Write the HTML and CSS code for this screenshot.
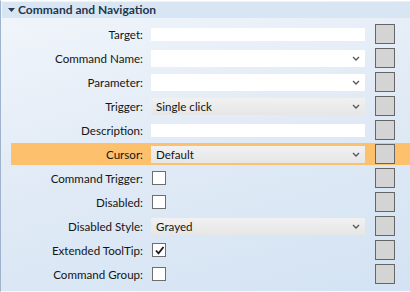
FILE: index.html
```html
<!DOCTYPE html>
<html lang="en">
<head>
  <meta charset="UTF-8">
  <title>Command and Navigation</title>
  <link rel="stylesheet" href="styles.css">
</head>
<body>
  <div class="panel">
    <div class="panel-head">
      <svg class="caret" width="7" height="4" viewBox="0 0 7 4"><path d="M0 0h7L3.5 4z" fill="#2a3b52"/></svg>
      <span>Command and Navigation</span>
    </div>

    <div class="row">
      <label>Target:</label>
      <div class="field text"></div>
      <div class="btn"></div>
    </div>
    <div class="row">
      <label>Command Name:</label>
      <div class="field combo white"><span></span><svg class="chev" width="8" height="5" viewBox="0 0 8 5"><path d="M1 1l3 3 3-3" fill="none" stroke="#555" stroke-width="1.3"/></svg></div>
      <div class="btn"></div>
    </div>
    <div class="row">
      <label>Parameter:</label>
      <div class="field combo white"><span></span><svg class="chev" width="8" height="5" viewBox="0 0 8 5"><path d="M1 1l3 3 3-3" fill="none" stroke="#555" stroke-width="1.3"/></svg></div>
      <div class="btn"></div>
    </div>
    <div class="row">
      <label>Trigger:</label>
      <div class="field combo"><span>Single click</span><svg class="chev" width="8" height="5" viewBox="0 0 8 5"><path d="M1 1l3 3 3-3" fill="none" stroke="#555" stroke-width="1.3"/></svg></div>
      <div class="btn"></div>
    </div>
    <div class="row">
      <label>Description:</label>
      <div class="field text"></div>
      <div class="btn"></div>
    </div>
    <div class="row selected">
      <label>Cursor:</label>
      <div class="field combo"><span>Default</span><svg class="chev" width="8" height="5" viewBox="0 0 8 5"><path d="M1 1l3 3 3-3" fill="none" stroke="#555" stroke-width="1.3"/></svg></div>
      <div class="btn"></div>
    </div>
    <div class="row">
      <label>Command Trigger:</label>
      <div class="field"><span class="check"></span></div>
      <div class="btn"></div>
    </div>
    <div class="row">
      <label>Disabled:</label>
      <div class="field"><span class="check"></span></div>
      <div class="btn"></div>
    </div>
    <div class="row">
      <label>Disabled Style:</label>
      <div class="field combo"><span>Grayed</span><svg class="chev" width="8" height="5" viewBox="0 0 8 5"><path d="M1 1l3 3 3-3" fill="none" stroke="#555" stroke-width="1.3"/></svg></div>
      <div class="btn"></div>
    </div>
    <div class="row">
      <label>Extended ToolTip:</label>
      <div class="field"><span class="check"><svg width="11" height="11" viewBox="0 0 11 11"><path d="M2 5.5l2.5 2.8L9.5 2" fill="none" stroke="#1a1a1a" stroke-width="1.8"/></svg></span></div>
      <div class="btn"></div>
    </div>
    <div class="row">
      <label>Command Group:</label>
      <div class="field"><span class="check"></span></div>
      <div class="btn"></div>
    </div>
  </div>
</body>
</html>
```

FILE: styles.css
```css
body { margin: 0; font-family: Lato, "Noto Sans", sans-serif; font-size: 11.6px; color: #151515; }
.panel { width: 409px; height: 289px; border-left: 1px solid #9fb3cc; border-top: 1px solid #fff; border-bottom: 1px solid #f4f8fc; padding-top: 1px; background: linear-gradient(165deg, #f2f6fb 0%, #e2ebf6 45%, #d3e3f3 100%); }
.panel-head { margin-left: 1px; height: 16px; background: #d8e6f3; display: flex; align-items: center; gap: 3px; padding-left: 6px; font-weight: bold; font-size: 12px; color: #1f3650; margin-bottom: 5px; }
.panel-head span { line-height: 16px; }
.row { height: 22px; margin: 0 0 2px 10px; display: flex; align-items: center; }
.row.selected { background: #fdc06d; }
.row label { width: 132px; text-align: right; white-space: nowrap; }
.field { width: 214px; margin-left: 8px; display: flex; align-items: center; }
.field.text { height: 13px; background: #fff; }
.field.combo { height: 17px; background: linear-gradient(#f1f1f1, #e6e6e6); justify-content: space-between; padding: 0 4px 0 5px; box-sizing: border-box; }
.field.combo.white { background: #fff; }
.chev { margin-right: 1px; }
.check { width: 12px; height: 12px; margin-left: 1px; border: 1px solid #6e6e6e; background: #fff; display: flex; align-items: center; justify-content: center; }
.btn { width: 18px; height: 18px; margin-left: 10px; border: 1px solid #666; background: #d4d4d4; }
```
